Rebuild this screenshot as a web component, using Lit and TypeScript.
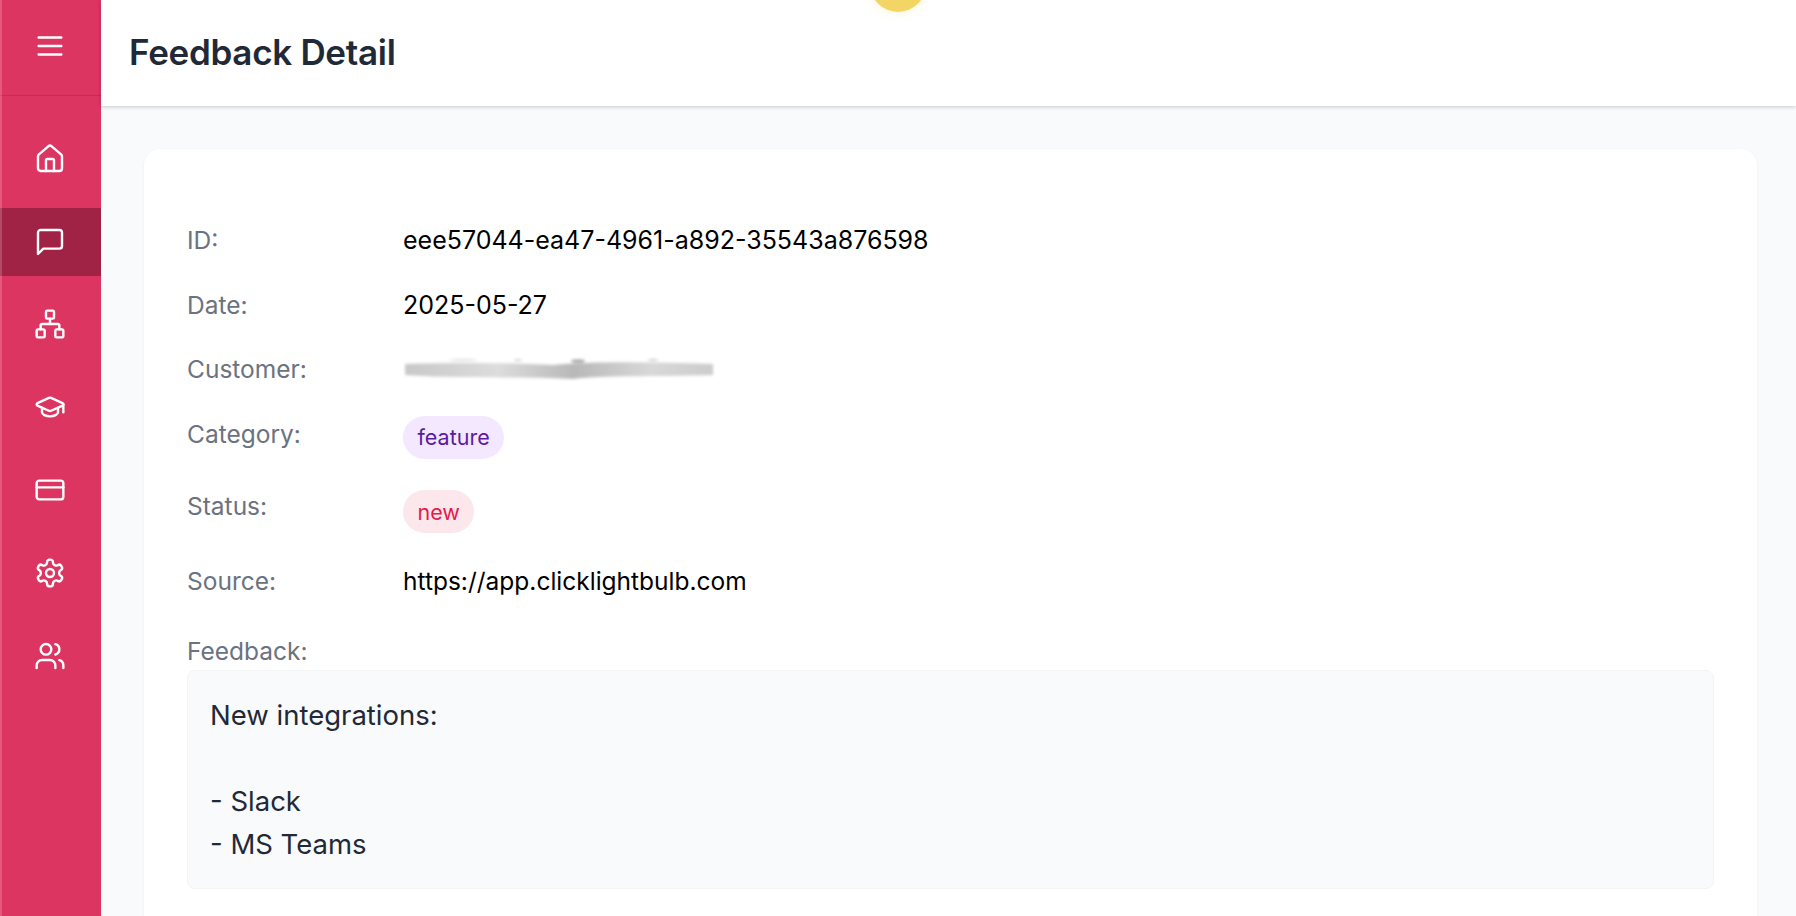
import { LitElement, html, css, svg } from "lit";
import { customElement } from "lit/decorators.js";

const icons = [
  svg`<path d="M15 21v-8a1 1 0 0 0-1-1h-4a1 1 0 0 0-1 1v8"/><path d="M3 10a2 2 0 0 1 .709-1.528l7-5.999a2 2 0 0 1 2.582 0l7 5.999A2 2 0 0 1 21 10v9a2 2 0 0 1-2 2H5a2 2 0 0 1-2-2z"/>`,
  svg`<path d="M21 15a2 2 0 0 1-2 2H7l-4 4V5a2 2 0 0 1 2-2h14a2 2 0 0 1 2 2z"/>`,
  svg`<rect x="16" y="16" width="6" height="6" rx="1"/><rect x="2" y="16" width="6" height="6" rx="1"/><rect x="9" y="2" width="6" height="6" rx="1"/><path d="M5 16v-3a1 1 0 0 1 1-1h12a1 1 0 0 1 1 1v3"/><path d="M12 12V8"/>`,
  svg`<path d="M21.42 10.922a1 1 0 0 0-.019-1.838L12.83 5.18a2 2 0 0 0-1.66 0L2.6 9.08a1 1 0 0 0 0 1.832l8.57 3.908a2 2 0 0 0 1.66 0z"/><path d="M22 10v6"/><path d="M6 12.5V16a6 3 0 0 0 12 0v-3.5"/>`,
  svg`<rect width="20" height="14" x="2" y="5" rx="2"/><line x1="2" x2="22" y1="10" y2="10"/>`,
  svg`<path d="M12.22 2h-.44a2 2 0 0 0-2 2v.18a2 2 0 0 1-1 1.73l-.43.25a2 2 0 0 1-2 0l-.15-.08a2 2 0 0 0-2.73.73l-.22.38a2 2 0 0 0 .73 2.73l.15.1a2 2 0 0 1 1 1.72v.51a2 2 0 0 1-1 1.74l-.15.09a2 2 0 0 0-.73 2.73l.22.38a2 2 0 0 0 2.73.73l.15-.08a2 2 0 0 1 2 0l.43.25a2 2 0 0 1 1 1.73V20a2 2 0 0 0 2 2h.44a2 2 0 0 0 2-2v-.18a2 2 0 0 1 1-1.73l.43-.25a2 2 0 0 1 2 0l.15.08a2 2 0 0 0 2.73-.73l.22-.39a2 2 0 0 0-.73-2.73l-.15-.08a2 2 0 0 1-1-1.74v-.5a2 2 0 0 1 1-1.74l.15-.09a2 2 0 0 0 .73-2.73l-.22-.38a2 2 0 0 0-2.73-.73l-.15.08a2 2 0 0 1-2 0l-.43-.25a2 2 0 0 1-1-1.73V4a2 2 0 0 0-2-2z"/><circle cx="12" cy="12" r="3"/>`,
  svg`<path d="M16 21v-2a4 4 0 0 0-4-4H6a4 4 0 0 0-4 4v2"/><circle cx="9" cy="7" r="4"/><path d="M22 21v-2a4 4 0 0 0-3-3.87"/><path d="M16 3.13a4 4 0 0 1 0 7.75"/>`,
];

@customElement("app-root")
export class AppRoot extends LitElement {
  static styles = css`
    :host {
      display: block;
      height: 916px;
      overflow: hidden;
      font-family: Inter, "Liberation Sans", sans-serif;
      position: relative;
      background: #f9fafb;
    }
    .shell { display: flex; height: 916px; }
    .side {
      width: 101px;
      flex: none;
      background: #dd3562;
      display: flex;
      flex-direction: column;
      position: relative;
    }
    .side::before {
      content: "";
      position: absolute;
      left: 0;
      top: 0;
      bottom: 0;
      width: 2px;
      background: rgba(255,255,255,.18);
    }
    .burger {
      height: 96px;
      flex: none;
      box-sizing: border-box;
      border-bottom: 1px solid #c22c55;
      display: flex;
      align-items: flex-start;
      justify-content: center;
      padding: 29px 1px 0 0;
    }
    .side svg { display: block; fill: none; stroke: #fff; stroke-linecap: round; stroke-linejoin: round; }
    .burger svg { stroke-width: 1.7; }
    .nav svg { stroke-width: 1.8; }
    .nav { display: flex; flex-direction: column; gap: 15px; padding-top: 28px; }
    .nav a {
      height: 68px;
      box-sizing: border-box;
      display: flex;
      align-items: center;
      justify-content: center;
      padding-right: 1px;
    }
    .nav a:first-child { height: 69px; padding-top: 1px; }
    .nav a.on { background: #a02346; margin-bottom: -1px; }
    .main { flex: 1; min-width: 0; display: flex; flex-direction: column; }
    .top {
      height: 106px;
      flex: none;
      box-sizing: border-box;
      background: #fff;
      box-shadow: 0 1px 4px rgba(0,0,0,.2);
      padding: 30px 0 0 28px;
      position: relative;
    }
    h1 {
      margin: 0;
      font-size: 35px;
      line-height: 45px;
      font-weight: 600;
      letter-spacing: -0.3px;
      color: #1f2937;
    }
    .content { padding: 43px 39px 0 43px; }
    .card {
      background: #fff;
      border-radius: 16px;
      box-shadow: 0 1px 3px rgba(0,0,0,.06);
      padding: 79px 43px 60px;
    }
    .row { display: flex; align-items: flex-start; }
    .row + .row { margin-top: 41px; }
    .row.after-chip { margin-top: 36px; }
    .label { width: 216px; flex: none; font-size: 24.5px; line-height: 24px; color: #6b7280; }
    .label.up { margin-top: -1px; }
    .value { font-size: 24.5px; line-height: 24px; color: #000; }
    .value.num { font-size: 25px; }
    .blur { display: block; margin: -2px 0 -2px; }
    .chip {
      display: inline-block;
      box-sizing: border-box;
      height: 43px;
      font-size: 21.5px;
      line-height: 27px;
      padding: 8px 14.5px;
      border-radius: 22px;
    }
    .chip.cat { margin-top: -7px; }
    .chip.st { margin-top: -5px; padding-top: 9px; }
    .purple { background: #f3e8ff; color: #5b1aa0; }
    .rose { background: #fce7ed; color: #e11d48; }
    .fb-label { margin-top: 46px; font-size: 24.5px; line-height: 24px; color: #6b7280; }
    .fb {
      margin-top: 7px;
      box-sizing: border-box;
      height: 219px;
      background: #f9fafb;
      border: 1px solid #f3f4f6;
      border-radius: 8px;
      padding: 23px 22px;
      font-size: 27.5px;
      line-height: 43px;
      color: #1f2937;
      white-space: pre-wrap;
    }
    .sun {
      position: absolute;
      left: 870px;
      top: -44px;
      width: 56px;
      height: 56px;
      border-radius: 50%;
      background: #f3d566;
      box-shadow: 0 0 12px rgba(245, 213, 101, .3);
    }
  `;

  render() {
    return html`
      <div class="shell">
        <aside class="side">
          <div class="burger">
            <svg width="34" height="34" viewBox="0 0 24 24"><path d="M4 6h16M4 12h16M4 18h16"/></svg>
          </div>
          <nav class="nav">
            ${icons.map(
              (ic, i) => html`<a class=${i === 1 ? "on" : ""}><svg width="32" height="32" viewBox="0 0 24 24">${ic}</svg></a>`
            )}
          </nav>
        </aside>
        <div class="main">
          <header class="top"><h1>Feedback Detail</h1></header>
          <div class="content">
            <section class="card">
              <div class="row"><div class="label">ID:</div><div class="value num">eee57044-ea47-4961-a892-35543a876598</div></div>
              <div class="row"><div class="label">Date:</div><div class="value num">2025-05-27</div></div>
              <div class="row">
                <div class="label up">Customer:</div>
                <svg class="blur" width="312" height="28" viewBox="0 0 312 28">
                  <defs>
                    <filter id="b" x="-5%" y="-50%" width="110%" height="200%"><feGaussianBlur stdDeviation="1.4"/></filter>
                    <linearGradient id="g"><stop offset="0" stop-color="#c8c8c8"/><stop offset=".3" stop-color="#dcdcdc"/><stop offset=".55" stop-color="#b8b8b8"/><stop offset=".8" stop-color="#d8d8d8"/><stop offset="1" stop-color="#cccccc"/></linearGradient>
                  </defs>
                  <g filter="url(#b)">
                    <path d="M2 8 C60 6 110 7 150 9 C190 5 250 6 310 8 L310 19 C250 21 200 19 170 23 C120 20 60 23 2 19Z" fill="url(#g)"/>
                    <ellipse cx="175" cy="5" rx="7" ry="1.6" fill="#a0a0a0"/>
                    <ellipse cx="250" cy="4" rx="5" ry="1" fill="#cfcfcf"/>
                    <ellipse cx="60" cy="4" rx="14" ry="1" fill="#dedede"/>
                    <ellipse cx="115" cy="4" rx="4" ry="1" fill="#d4d4d4"/>
                  </g>
                </svg>
              </div>
              <div class="row"><div class="label up">Category:</div><span class="chip purple cat">feature</span></div>
              <div class="row after-chip"><div class="label up">Status:</div><span class="chip rose st">new</span></div>
              <div class="row after-chip"><div class="label">Source:</div><div class="value">https://app.clicklightbulb.com</div></div>
              <div class="fb-label">Feedback:</div>
              <div class="fb">New integrations:

- Slack
- MS Teams</div>
            </section>
          </div>
        </div>
      </div>
      <div class="sun"></div>
    `;
  }
}
